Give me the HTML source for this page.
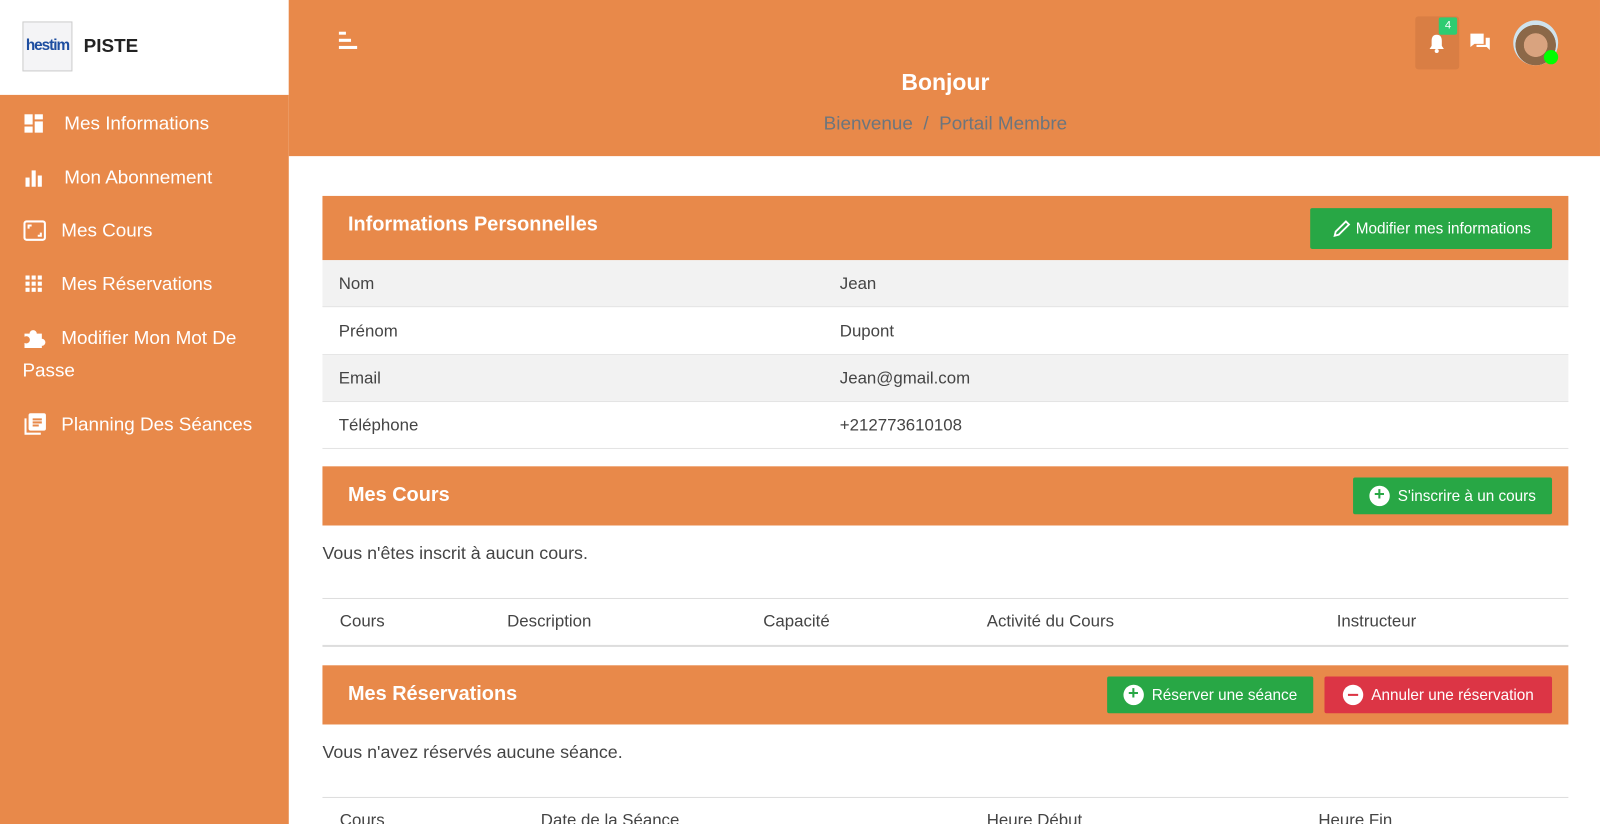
<!DOCTYPE html>
<html><head><meta charset="utf-8"><style>
*{box-sizing:border-box;margin:0;padding:0}
html,body{width:1600px;height:824px;overflow:hidden}
body{font-family:"Liberation Sans",sans-serif;background:#fff;color:#444}
#wrap{position:relative;width:1568px;height:808px;transform:scale(1.0204);transform-origin:0 0}
#side{position:absolute;left:0;top:0;width:283px;height:808px;background:#E8894A}
#logo{position:absolute;left:0;top:0;width:283px;height:93px;background:#fff}
#logo .box{position:absolute;left:22px;top:21px;width:49px;height:49px;border:1px solid #ccc;background:#f4f4f6;font-size:15px;color:#1e4ea0;font-weight:bold;text-align:center;line-height:45px;letter-spacing:-1px}
#logo .t{position:absolute;left:82px;top:34px;font-size:18.5px;font-weight:bold;color:#222}
.nav{position:absolute;left:22px;color:#fff;font-size:18.5px;display:flex;align-items:center}
.nav svg{margin-right:14px}
#head{position:absolute;left:283px;top:0;width:1285px;height:153px;background:#E8894A}
.btn{position:absolute;color:#fff;font-size:15px;display:flex;align-items:center;justify-content:center;border-radius:2px}
.g{background:#28a745}.r{background:#dc3545}
.ch{position:absolute;left:316px;width:1221px;background:#E8894A;color:#fff;font-size:19.5px;font-weight:bold}
.ch span{position:absolute;left:25px}
.row{position:absolute;left:316px;width:1221px;height:46px;font-size:16.5px;color:#444;border-bottom:1px solid #e4e4e4}
.row span{position:absolute;top:14px}
.txt{position:absolute;left:316px;font-size:17.5px;color:#444}
.th{position:absolute;font-size:16.5px;color:#444}
.line{position:absolute;left:316px;width:1221px;height:1px;background:#ddd}
.ic{width:20px;height:20px;border-radius:50%;background:#fff;display:inline-block;position:relative;margin-right:8px}
</style></head><body><div id="wrap">
<div id="side">
<div id="logo"><div class="box">hestim</div><div class="t">PISTE</div></div>
<div class="nav" style="top:110px"><svg width="22" height="22" viewBox="0 0 22 22" fill="#fff"><rect x="2" y="2" width="8" height="10"/><rect x="12" y="2" width="8" height="5"/><rect x="12" y="9" width="8" height="11"/><rect x="2" y="14" width="8" height="6"/></svg><span style="margin-left:5px">Mes Informations</span></div>
<div class="nav" style="top:163px"><svg width="22" height="22" viewBox="0 0 22 22" fill="#fff"><rect x="3" y="11" width="4" height="9"/><rect x="9" y="4" width="4" height="16"/><rect x="15" y="9" width="4" height="11"/></svg><span style="margin-left:5px">Mon Abonnement</span></div>
<div class="nav" style="top:215px"><svg width="24" height="22" viewBox="0 0 24 22" fill="none" stroke="#fff" stroke-width="2"><rect x="2" y="2" width="20" height="18" rx="2"/><path d="M6 9V6h3M18 13v3h-3"/></svg>Mes Cours</div>
<div class="nav" style="top:267px"><svg width="24" height="22" viewBox="0 0 24 22" fill="#fff"><rect x="3" y="3" width="4" height="4"/><rect x="9" y="3" width="4" height="4"/><rect x="15" y="3" width="4" height="4"/><rect x="3" y="9" width="4" height="4"/><rect x="9" y="9" width="4" height="4"/><rect x="15" y="9" width="4" height="4"/><rect x="3" y="15" width="4" height="4"/><rect x="9" y="15" width="4" height="4"/><rect x="15" y="15" width="4" height="4"/></svg>Mes Réservations</div>
<div class="nav" style="top:319px"><svg width="24" height="24" viewBox="0 0 24 24" fill="#fff"><path d="M2 8h5a3.5 3.5 0 1 1 7 0h5v5a3.5 3.5 0 1 1 0 7v2H2v-5a3.5 3.5 0 1 0 0-6z"/></svg>Modifier Mon Mot De</div>
<div class="nav" style="top:352px">Passe</div>
<div class="nav" style="top:404px"><svg width="24" height="24" viewBox="0 0 24 24" fill="none" stroke="#fff" stroke-width="2"><path d="M3 6v15h15"/><rect x="7" y="2" width="15" height="15" rx="1" fill="#fff"/><path d="M10 7h9M10 10h9M10 13h6" stroke="#E8894A"/></svg>Planning Des Séances</div>
</div>
<div id="head">
<svg style="position:absolute;left:49px;top:31px" width="20" height="18" viewBox="0 0 20 18" fill="#fff"><rect x="0" y="0" width="7" height="3"/><rect x="0" y="7" width="12" height="3"/><rect x="0" y="14" width="18" height="3"/></svg>
<div style="position:absolute;left:1104px;top:16px;width:43px;height:52px;background:#d97e44;border-radius:3px"></div>
<svg style="position:absolute;left:1115px;top:32px" width="20" height="22" viewBox="0 0 20 22" fill="#fff"><path d="M10 2c-4 0-5 3-5 6v5l-2 3h14l-2-3V8c0-3-1-6-5-6z"/><circle cx="10" cy="18" r="2"/></svg>
<div style="position:absolute;left:1127px;top:17px;width:18px;height:17px;background:#2ecc71;color:#fff;font-size:11px;text-align:center;line-height:17px;border-radius:2px">4</div>
<svg style="position:absolute;left:1157px;top:32px" width="22" height="20" viewBox="0 0 22 20" fill="#fff"><path d="M1 1h13v10H5l-4 3z"/><path d="M16 5h4v12l-3-3H7v-2h9z"/></svg>
<div style="position:absolute;left:1200px;top:20px;width:44px;height:44px;border-radius:50%;background:radial-gradient(circle at 50% 55%,#d9a37f 0 35%,#8c6848 36% 60%,#cfe3ee 61%)"></div>
<div style="position:absolute;left:1230px;top:49px;width:14px;height:14px;border-radius:50%;background:#0f0"></div>
<div style="position:absolute;left:0;width:1287px;top:68px;text-align:center;color:#fff;font-size:22.5px;font-weight:bold">Bonjour</div>
<div style="position:absolute;left:0;width:1287px;top:110px;text-align:center;color:#6c757d;font-size:18.5px">Bienvenue &nbsp;/&nbsp; Portail Membre</div>
</div>

<div class="ch" style="top:192px;height:63px"><span style="top:17px">Informations Personnelles</span></div>
<div class="btn g" style="left:1284px;top:204px;width:237px;height:40px"><svg width="20" height="20" viewBox="0 0 20 20" fill="none" stroke="#fff" stroke-width="1.8" style="margin-right:4px"><path d="M3 17l1-4L14 3l3 3L7 16z"/></svg>Modifier mes informations</div>
<div class="row" style="top:255px;background:#f2f2f2"><span style="left:16px">Nom</span><span style="left:507px">Jean</span></div>
<div class="row" style="top:302px"><span style="left:16px">Prénom</span><span style="left:507px">Dupont</span></div>
<div class="row" style="top:348px;background:#f2f2f2"><span style="left:16px">Email</span><span style="left:507px">Jean@gmail.com</span></div>
<div class="row" style="top:394px"><span style="left:16px">Téléphone</span><span style="left:507px">+212773610108</span></div>

<div class="ch" style="top:457px;height:58px"><span style="top:17px">Mes Cours</span></div>
<div class="btn g" style="left:1326px;top:468px;width:195px;height:36px"><span class="ic"><b style="position:absolute;left:0;right:0;top:-2px;color:#28a745;text-align:center;font-size:18px">+</b></span>S'inscrire à un cours</div>
<div class="txt" style="top:532px">Vous n'êtes inscrit à aucun cours.</div>
<div class="line" style="top:586px"></div>
<div class="th" style="left:333px;top:600px">Cours</div><div class="th" style="left:497px;top:600px">Description</div><div class="th" style="left:748px;top:600px">Capacité</div><div class="th" style="left:967px;top:600px">Activité du Cours</div><div class="th" style="left:1310px;top:600px">Instructeur</div>
<div class="line" style="top:632px;height:2px"></div>

<div class="ch" style="top:652px;height:58px"><span style="top:17px">Mes Réservations</span></div>
<div class="btn g" style="left:1085px;top:663px;width:202px;height:36px"><span class="ic"><b style="position:absolute;left:0;right:0;top:-2px;color:#28a745;text-align:center;font-size:18px">+</b></span>Réserver une séance</div>
<div class="btn r" style="left:1298px;top:663px;width:223px;height:36px"><span class="ic"><b style="position:absolute;left:5px;top:9px;width:10px;height:2px;background:#dc3545"></b></span>Annuler une réservation</div>
<div class="txt" style="top:727px">Vous n'avez réservés aucune séance.</div>
<div class="line" style="top:781px"></div>
<div class="th" style="left:333px;top:795px">Cours</div><div class="th" style="left:530px;top:795px">Date de la Séance</div><div class="th" style="left:967px;top:795px">Heure Début</div><div class="th" style="left:1292px;top:795px">Heure Fin</div>
</div></body></html>
